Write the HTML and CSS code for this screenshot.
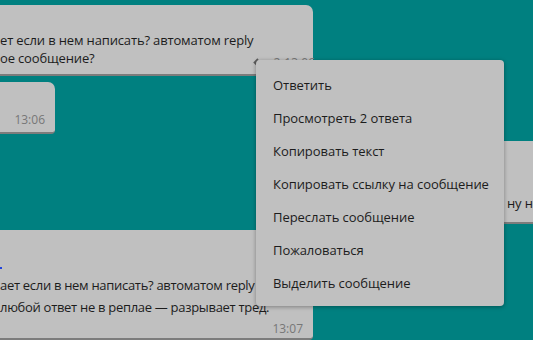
FILE: index.html
```html
<!DOCTYPE html>
<html lang="ru">
  <head>
    <meta charset="UTF-8" />
    <meta name="viewport" content="width=device-width, initial-scale=1.0" />
    <title>Чат</title>
    <link rel="stylesheet" href="styles.css">
  </head>

  <body>
    <div class="chat">
      <div class="msg msg-first">
        <div class="msg-text">
          <p>ет если в нем написать? автоматом reply</p>
          <p>ое сообщение?</p>
        </div>
        <div class="meta">
          <svg class="reply-icon" width="13" height="11" viewBox="0 0 13 11">
            <path d="M5 1 L1.5 4.5 L5 8 M1.5 4.5 H7.5 A4 4 0 0 1 11.5 8.5 V11" fill="none" stroke="#5c5c5c" stroke-width="1.8" />
          </svg>
          <span>2</span>
          <span>13:06</span>
        </div>
      </div>

      <div class="msg msg-short">
        <span class="time">13:06</span>
      </div>

      <div class="msg msg-right">
        <p>ну не</p>
      </div>

      <div class="msg msg-last">
        <div class="link-line"><i class="link-end"></i></div>
        <p>ает если в нем написать? автоматом reply</p>
        <p>любой ответ не в реплае — разрывает тред.</p>
        <div class="msg-foot"><span class="time">13:07</span></div>
      </div>

      <ul class="menu">
        <li>Ответить</li>
        <li>Просмотреть 2 ответа</li>
        <li>Копировать текст</li>
        <li>Копировать ссылку на сообщение</li>
        <li>Переслать сообщение</li>
        <li>Пожаловаться</li>
        <li>Выделить сообщение</li>
      </ul>
    </div>
  </body>
</html>
```

FILE: styles.css
```css
* {
  box-sizing: border-box;
}

body {
  margin: 0;
  background: #008080;
  font-family: "Open Sans", "Noto Sans", sans-serif;
  font-size: 13px;
  color: #1c1c1c;
}

.chat {
  position: relative;
  height: 340px;
  overflow: hidden;
  display: flex;
  flex-direction: column;
  gap: 6px;
  padding-top: 5px;
}

.msg {
  background: #c0c0c0;
  border-bottom: 2px solid #7c7c7c;
  border-radius: 0 7px 4px 0;
  flex-shrink: 0;
}

.msg p {
  margin: 0;
  white-space: nowrap;
  letter-spacing: -0.15px;
}

.msg .time {
  font-size: 12px;
  color: #777;
}

.msg-first {
  width: 313px;
  height: 71px;
  display: flex;
  padding: 26px 10px 7px 0;
}

.msg-first .msg-text {
  flex: 1;
  line-height: 18px;
}

.msg-first .meta {
  align-self: flex-end;
  display: flex;
  align-items: center;
  gap: 4px;
  font-size: 12px;
  color: #777;
  line-height: 14px;
  margin-bottom: -3px;
}

.reply-icon {
  margin-right: 3px;
}

.msg-short {
  width: 55px;
  height: 52px;
  display: flex;
  align-items: flex-end;
  justify-content: flex-end;
  padding: 0 10px 4px 0;
  line-height: 16px;
}

.msg-right {
  align-self: flex-end;
  width: 36px;
  height: 83px;
  margin-top: 1px;
  border-radius: 7px 0 0 4px;
  display: flex;
  align-items: flex-end;
  padding: 0 0 10px 10px;
  line-height: 18px;
  overflow: hidden;
}

.msg-last {
  width: 313px;
  flex: 1;
  padding: 22px 10px 0 0;
  line-height: 22px;
}

.msg-last p {
  letter-spacing: -0.3px;
}

.link-line {
  height: 22px;
  padding-top: 15px;
}

.link-end {
  display: block;
  width: 2px;
  height: 2px;
  background: #2143dc;
}

.msg-foot {
  display: flex;
  justify-content: flex-end;
  line-height: 16px;
  padding-top: 3px;
}

.menu {
  position: absolute;
  left: 256px;
  top: 60px;
  width: 248px;
  margin: 0;
  padding: 9px 0 6px;
  list-style: none;
  background: #c0c0c0;
  border-radius: 4px;
  box-shadow: 0 1px 4px rgba(0, 0, 0, 0.35);
}

.menu li {
  height: 33px;
  line-height: 33px;
  padding-left: 17px;
  white-space: nowrap;
  letter-spacing: -0.05px;
}
```
